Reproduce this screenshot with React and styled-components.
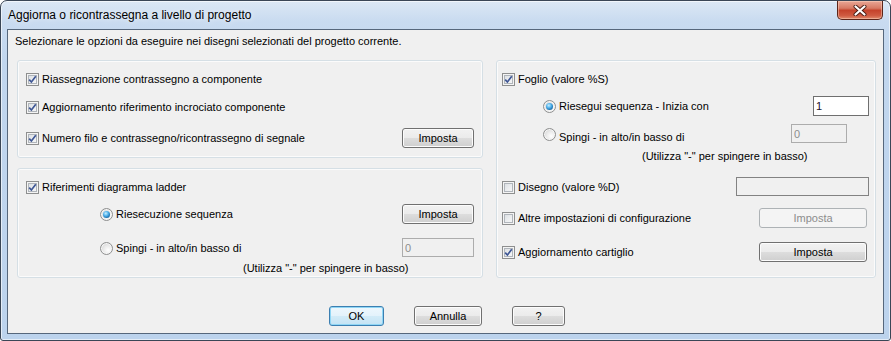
import React from 'react';
import styled, { createGlobalStyle, css } from 'styled-components';

const GlobalStyle = createGlobalStyle`
  html, body {
    margin: 0;
    padding: 0;
    background: #ffffff;
  }
  body {
    font-family: "Liberation Sans", Arial, sans-serif;
    font-size: 11px;
    color: #000;
  }
`;

const Check = ({ checked }) => (
  <CheckBox>
    {checked && (
      <svg width="9" height="9" viewBox="0 0 9 9">
        <path d="M1.2 4.6 L3.4 7 L7.8 1.3" fill="none" stroke="#3f5795" strokeWidth="1.7" />
      </svg>
    )}
  </CheckBox>
);

const Radio = ({ checked }) => (
  <RadioCircle>{checked && <RadioDot />}</RadioCircle>
);

const App = () => {
  return (
    <>
      <GlobalStyle />
      <Window>
        <TitleBar>
          <Title>Aggiorna o ricontrassegna a livello di progetto</Title>
          <CloseBtn>
            <svg width="14" height="11" viewBox="0 0 14 11">
              <path d="M2.5 1.5 L11.5 9.5 M11.5 1.5 L2.5 9.5" stroke="#4a1d14" strokeWidth="4" strokeLinecap="round" />
              <path d="M2.5 1.5 L11.5 9.5 M11.5 1.5 L2.5 9.5" stroke="#ffffff" strokeWidth="2.2" strokeLinecap="round" />
            </svg>
          </CloseBtn>
        </TitleBar>

        <Frame>
          <Client>
            <Intro>Selezionare le opzioni da eseguire nei disegni selezionati del progetto corrente.</Intro>

            <Columns>
              <LeftCol>
                <Group $h={98} $pl={8} $pr={8}>
                  <Row>
                    <Check checked />
                    <Label>Riassegnazione contrassegno a componente</Label>
                  </Row>
                  <Row $mt={8}>
                    <Check checked />
                    <Label>Aggiornamento riferimento incrociato componente</Label>
                  </Row>
                  <Row $mt={11}>
                    <Check checked />
                    <Label>Numero filo e contrassegno/ricontrassegno di segnale</Label>
                    <Button $w={72}>Imposta</Button>
                  </Row>
                </Group>

                <Group $grow $pl={8} $pr={8}>
                  <Row>
                    <Check checked />
                    <Label>Riferimenti diagramma ladder</Label>
                  </Row>
                  <Row $mt={7} $indent={74}>
                    <Radio checked />
                    <Label>Riesecuzione sequenza</Label>
                    <Button $w={72}>Imposta</Button>
                  </Row>
                  <Row $mt={14} $indent={74}>
                    <Radio />
                    <Label>Spingi - in alto/in basso di</Label>
                    <TextBox $w={72} $muted readOnly value="0" />
                  </Row>
                  <Note $mt={4} $indent={217}>(Utilizza "-" per spingere in basso)</Note>
                </Group>
              </LeftCol>

              <Group $pl={5} $pr={6}>
                <Row>
                  <Check checked />
                  <Label>Foglio (valore %S)</Label>
                </Row>
                <Row $mt={7} $indent={41}>
                  <Radio checked />
                  <Label>Riesegui sequenza - Inizia con</Label>
                  <TextBox $w={56} readOnly value="1" />
                </Row>
                <Row $mt={8} $indent={41} $split>
                  <Radio />
                  <Label>Spingi - in alto/in basso di</Label>
                  <TextBox $w={56} $mr={22} $muted readOnly value="0" />
                </Row>
                <Note $mt={6} $indent={140}>(Utilizza "-" per spingere in basso)</Note>
                <Row $mt={14}>
                  <Check />
                  <Label>Disegno (valore %D)</Label>
                  <TextBox $w={133} $muted $dark readOnly value="" />
                </Row>
                <Row $mt={11}>
                  <Check />
                  <Label>Altre impostazioni di configurazione</Label>
                  <Button $w={108} $mr={2} disabled>Imposta</Button>
                </Row>
                <Row $mt={14}>
                  <Check checked />
                  <Label>Aggiornamento cartiglio</Label>
                  <Button $w={108} $mr={2}>Imposta</Button>
                </Row>
              </Group>
            </Columns>

            <Footer>
              <Button $w={55} $default>OK</Button>
              <Button $w={68}>Annulla</Button>
              <Button $w={53}>?</Button>
            </Footer>
          </Client>
        </Frame>
      </Window>
    </>
  );
};

export default App;

const Window = styled.div`
  width: 891px;
  height: 341px;
  box-sizing: border-box;
  border: 1px solid #3a4656;
  border-radius: 7px 7px 3px 3px;
  background: linear-gradient(180deg, #dce8f5 0px, #c9dbf0 20px, #c1d6ee 60px, #bcd3ed 100%);
  box-shadow: inset 0 0 0 1px rgba(255, 255, 255, 0.6);
  display: flex;
  flex-direction: column;
  overflow: hidden;
`;

const TitleBar = styled.div`
  height: 28px;
  display: flex;
  align-items: flex-start;
  flex: none;
`;

const Title = styled.div`
  margin: 6px 0 0 7px;
  font-family: "Liberation Sans", Arial, sans-serif;
  font-size: 12px;
  line-height: 16px;
  color: #000;
  white-space: nowrap;
  text-shadow: 0 0 6px rgba(255, 255, 255, 0.9);
`;

const CloseBtn = styled.div`
  margin-left: auto;
  margin-right: 7px;
  width: 46px;
  height: 19px;
  box-sizing: border-box;
  border: 1px solid #5c2519;
  border-top: none;
  border-radius: 0 0 5px 5px;
  background: linear-gradient(180deg, #e9a796 0%, #d77a64 40%, #c5432b 52%, #cf5a40 80%, #e08a6c 100%);
  box-shadow: inset 0 0 0 1px rgba(255, 220, 200, 0.45);
  display: flex;
  align-items: center;
  justify-content: center;
`;

const Frame = styled.div`
  flex: 1;
  display: flex;
  padding: 0 6px 6px;
  min-height: 0;
`;

const Client = styled.div`
  flex: 1;
  border: 1px solid #56677c;
  background: #f0f0f0;
  display: flex;
  flex-direction: column;
`;

const Intro = styled.div`
  padding: 5px 0 0 7px;
  line-height: 13px;
  white-space: nowrap;
`;

const Columns = styled.div`
  margin: 12px 7px 0 9px;
  height: 218px;
  display: grid;
  grid-template-columns: 466px 380px;
  column-gap: 13px;
`;

const LeftCol = styled.div`
  display: flex;
  flex-direction: column;
  gap: 10px;
`;

const Group = styled.div`
  box-sizing: border-box;
  border: 1px solid #d5dfe5;
  border-radius: 3px;
  box-shadow: inset 0 0 0 1px #fbfbfb;
  padding: 8px ${(p) => p.$pr}px 0 ${(p) => p.$pl}px;
  display: flex;
  flex-direction: column;
  ${(p) => p.$h && css`height: ${p.$h}px;`}
  ${(p) => p.$grow && css`flex: 1;`}
`;

const Row = styled.div`
  height: 20px;
  margin-top: ${(p) => p.$mt || 0}px;
  padding-left: ${(p) => p.$indent || 0}px;
  display: flex;
  align-items: ${(p) => (p.$split ? 'flex-end' : 'center')};
  flex: none;
`;

const Label = styled.span`
  margin-left: 3px;
  line-height: 13px;
  white-space: nowrap;
  margin-right: auto;
`;

const Note = styled.div`
  margin-top: ${(p) => p.$mt}px;
  padding-left: ${(p) => p.$indent}px;
  line-height: 13px;
  white-space: nowrap;
`;

const CheckBox = styled.span`
  width: 13px;
  height: 13px;
  box-sizing: border-box;
  flex: none;
  border: 1px solid #8e8f8f;
  background: linear-gradient(135deg, #d6dade 0%, #eceef0 55%, #fbfbfb 100%);
  box-shadow: inset 0 0 0 1px #f4f4f4, inset 0 0 0 2px #b0b5bb;
  display: flex;
  align-items: center;
  justify-content: center;
  align-self: center;
`;

const RadioCircle = styled.span`
  width: 13px;
  height: 13px;
  box-sizing: border-box;
  flex: none;
  border: 1px solid #8e8f8f;
  border-radius: 50%;
  background: radial-gradient(circle at 65% 65%, #ffffff 0%, #eaeaea 45%, #c9c9c9 100%);
  box-shadow: inset 0 0 0 1px #f6f6f6;
  display: flex;
  align-items: center;
  justify-content: center;
  align-self: center;
`;

const RadioDot = styled.span`
  width: 7px;
  height: 7px;
  border-radius: 50%;
  background: radial-gradient(circle at 40% 35%, #c8efff 0%, #4fb0ea 40%, #176aa8 75%, #0d3f6e 100%);
`;

const Button = styled.button`
  width: ${(p) => p.$w}px;
  height: 20px;
  margin-right: ${(p) => p.$mr || 0}px;
  flex: none;
  box-sizing: border-box;
  padding: 0;
  font-family: "Liberation Sans", Arial, sans-serif;
  font-size: 11px;
  color: #000;
  border: 1px solid #707070;
  border-radius: 3px;
  background: linear-gradient(180deg, #f2f2f2 0%, #ebebeb 50%, #dddddd 50%, #cfcfcf 100%);
  box-shadow: inset 0 0 0 1px #fcfcfc;

  ${(p) =>
    p.disabled &&
    css`
      color: #8d8d8d;
      border-color: #adb2b5;
      background: #f4f4f4;
      box-shadow: none;
    `}

  ${(p) =>
    p.$default &&
    css`
      border-color: #3c7fb1;
      background: linear-gradient(180deg, #eef7fd 0%, #e3f2fb 50%, #d2ebf8 50%, #c4e3f4 100%);
      box-shadow: inset 0 0 0 1px #8fd6f5;
    `}
`;

const TextBox = styled.input`
  width: ${(p) => p.$w}px;
  height: ${(p) => (p.$muted ? 19 : 20)}px;
  margin-right: ${(p) => p.$mr || 0}px;
  align-self: ${(p) => (p.$muted ? 'flex-start' : 'center')};
  flex: none;
  box-sizing: border-box;
  padding: 0 0 0 2px;
  font-family: "Liberation Sans", Arial, sans-serif;
  font-size: 11px;
  color: ${(p) => (p.$muted ? '#8d8d8d' : '#1b0f2a')};
  border: 1px solid ${(p) => (p.$dark ? '#828282' : p.$muted ? '#acacac' : '#6f6f6f')};
  background: ${(p) => (p.$muted ? '#f0f0f0' : '#ffffff')};
  outline: none;
`;

const Footer = styled.div`
  margin-top: 28px;
  padding-left: 3px;
  display: flex;
  justify-content: center;
  gap: 30px;
`;
